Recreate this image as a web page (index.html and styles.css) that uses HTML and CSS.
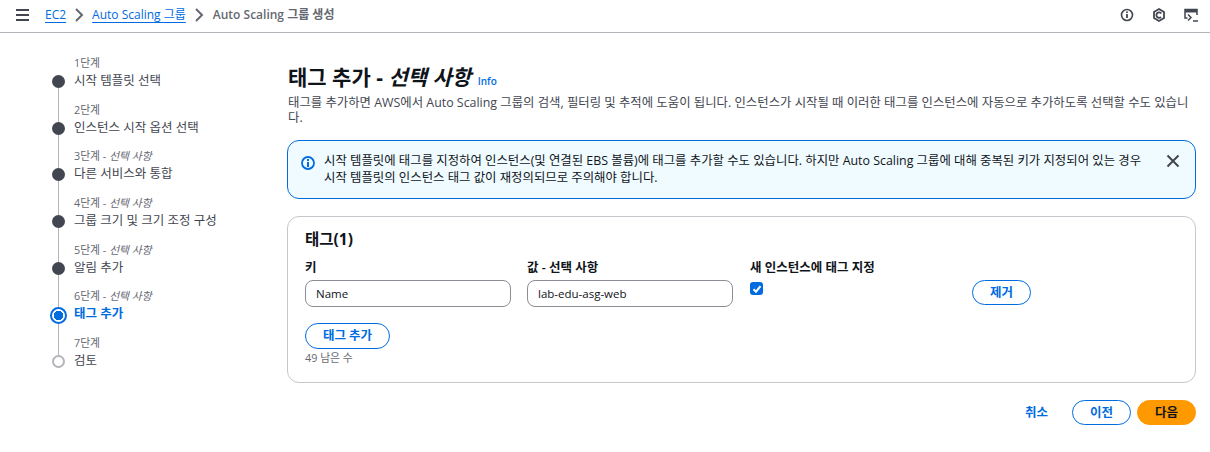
FILE: index.html
```html
<!DOCTYPE html>
<html lang="ko">
<head>
<meta charset="utf-8">
<title>Auto Scaling 그룹 생성</title>
<link rel="stylesheet" href="styles.css">
</head>
<body>
<header class="topbar">
  <svg class="menu" width="16" height="16" viewBox="0 0 16 16"><path d="M1 3h13M1 8h13M1 13h13" stroke="#424650" stroke-width="2" fill="none"/></svg>
  <nav class="crumbs">
    <a class="crumb-link">EC2</a>
    <svg class="chev" width="16" height="16" viewBox="0 0 16 16"><path d="M5 2l6 6-6 6" stroke="#656871" stroke-width="2" fill="none"/></svg>
    <a class="crumb-link">Auto Scaling 그룹</a>
    <svg class="chev" width="16" height="16" viewBox="0 0 16 16"><path d="M5 2l6 6-6 6" stroke="#656871" stroke-width="2" fill="none"/></svg>
    <span class="crumb-current">Auto Scaling 그룹 생성</span>
  </nav>
  <div class="tools">
    <svg width="16" height="16" viewBox="0 0 16 16"><circle cx="8" cy="8" r="5.500" stroke="#424650" stroke-width="1.600" fill="none"/><path d="M8 7v4M8 4.500v1.500" stroke="#424650" stroke-width="1.800" fill="none"/></svg>
    <svg width="16" height="16" viewBox="0 0 16 16"><path d="M8 2l5 2.900v6.200L8 14l-5-2.900V4.900z" stroke="#424650" stroke-width="1.800" fill="none"/><path d="M10.300 6.500A2.700 2.700 0 1 0 10 10" stroke="#424650" stroke-width="1.800" fill="none"/></svg>
    <svg width="16" height="16" viewBox="0 0 16 16"><path d="M4.500 11H2V2.500h12V8" stroke="#424650" stroke-width="1.500" fill="none"/><path d="M2 2.500h12v3H2z" fill="#424650"/><path d="M5 7.500l3 3-3 3" stroke="#424650" stroke-width="1.500" fill="none"/><path d="M10 14h5" stroke="#424650" stroke-width="1.500" fill="none"/></svg>
  </div>
</header>
<div class="layout">
  <ol class="steps">
    <li class="step"><span class="step-no">1단계</span><span class="step-title">시작 템플릿 선택</span></li>
    <li class="step"><span class="step-no">2단계</span><span class="step-title">인스턴스 시작 옵션 선택</span></li>
    <li class="step"><span class="step-no">3단계 - <i>선택 사항</i></span><span class="step-title">다른 서비스와 통합</span></li>
    <li class="step"><span class="step-no">4단계 - <i>선택 사항</i></span><span class="step-title">그룹 크기 및 크기 조정 구성</span></li>
    <li class="step"><span class="step-no">5단계 - <i>선택 사항</i></span><span class="step-title">알림 추가</span></li>
    <li class="step step-active"><span class="step-no">6단계 - <i>선택 사항</i></span><span class="step-title">태그 추가</span></li>
    <li class="step step-todo"><span class="step-no">7단계</span><span class="step-title">검토</span></li>
  </ol>
  <main class="main">
    <div class="page-head">
      <h1 class="page-title">태그 추가 - <i>선택 사항</i> <a class="info">Info</a></h1>
      <p class="page-desc">태그를 추가하면 AWS에서 Auto Scaling 그룹의 검색, 필터링 및 추적에 도움이 됩니다. 인스턴스가 시작될 때 이러한 태그를 인스턴스에 자동으로 추가하도록 선택할 수도 있습니다.</p>
    </div>
    <div class="alert">
      <svg class="alert-icon" width="16" height="16" viewBox="0 0 16 16"><circle cx="8" cy="8" r="6" stroke="#006ce0" stroke-width="1.800" fill="none"/><path d="M8 7v5M8 4v2" stroke="#006ce0" stroke-width="2" fill="none"/></svg>
      <p class="alert-text">시작 템플릿에 태그를 지정하여 인스턴스(및 연결된 EBS 볼륨)에 태그를 추가할 수도 있습니다. 하지만 Auto Scaling 그룹에 대해 중복된 키가 지정되어 있는 경우 시작 템플릿의 인스턴스 태그 값이 재정의되므로 주의해야 합니다.</p>
      <svg class="alert-close" width="16" height="16" viewBox="0 0 16 16"><path d="M2.500 2.500l11 11M13.500 2.500l-11 11" stroke="#424650" stroke-width="2" fill="none"/></svg>
    </div>
    <section class="card">
      <h2 class="card-title">태그(1)</h2>
      <div class="tag-row">
        <div class="field field-text">
          <label class="field-label">키</label>
          <div class="input">Name</div>
        </div>
        <div class="field field-text">
          <label class="field-label">값 - 선택 사항</label>
          <div class="input">lab-edu-asg-web</div>
        </div>
        <div class="field field-check">
          <label class="field-label">새 인스턴스에 태그 지정</label>
          <span class="check"><svg width="10" height="10" viewBox="0 0 10 10"><path d="M1.500 5.200l2.500 2.500 4.500-5.500" stroke="#fff" stroke-width="2" fill="none"/></svg></span>
        </div>
        <button class="btn btn-remove">제거</button>
      </div>
      <button class="btn btn-add">태그 추가</button>
      <p class="remaining">49 남은 수</p>
    </section>
    <div class="actions">
      <a class="cancel">취소</a>
      <button class="btn">이전</button>
      <button class="btn btn-primary">다음</button>
    </div>
  </main>
</div>
</body>
</html>
```
FILE: styles.css
```css
*, *::before, *::after { box-sizing: border-box; }
html, body { margin: 0; padding: 0; }
body {
  width: 1210px; height: 452px; overflow: hidden; background: #fff; color: #0f141a;
  font-family: "Open Sans", "Noto Sans CJK KR", sans-serif; font-size: 12px; line-height: 16px;
}
.topbar {
  height: 33px; border-bottom: 1px solid #b4b4bb; display: flex; align-items: center;
  padding: 0 11px 2px 15px;
}
.menu { margin-right: 14px; }
.crumbs { display: flex; align-items: center; gap: 5px; font-size: 12px; color: #424650; }
.crumb-link { color: #006ce0; text-decoration: underline; text-underline-offset: 3px; }
.crumb-current { font-weight: 600; color: #656871; margin-left: 1px; }
.tools { margin-left: auto; display: flex; gap: 16px; }
.layout { display: flex; }
.steps { list-style: none; margin: 0; padding: 22px 0 0 51px; width: 287px; flex: none; }
.step {
  position: relative; height: 46.700px; padding: 1px 0 0 23px; display: flex; flex-direction: column;
}
.step::before {
  content: ""; position: absolute; left: 1px; top: 20px; width: 13px; height: 13px; border-radius: 50%;
  background: #424650; z-index: 1;
}
.step::after {
  content: ""; position: absolute; left: 7px; top: 33px; width: 1px; height: 34px; background: #b4b4bb;
}
.step:last-child::after { display: none; }
.step-no { font-size: 10.800px; line-height: 14px; color: #656871; }
.step-no i { font-style: italic; }
.step-title { font-size: 12.500px; line-height: 18px; color: #424650; margin-top: 2px; }
.step-active .step-title { color: #006ce0; font-weight: 700; }
.step-active { z-index: 1; }
.step-active::before {
  left: -1px; top: 19px; width: 17px; height: 17px; border: 2px solid #006ce0;
  background: radial-gradient(circle, #006ce0 4.500px, #fff 5px);
}
.step-todo::before { background: #fff; border: 2px solid #b4b4bb; left: 1px; top: 20px; width: 13px; height: 13px; }
.main { width: 909px; padding-top: 32px; }
.page-head { padding-left: 1px; }
.page-title { margin: 0; font-size: 21px; line-height: 24px; font-weight: 700; color: #0f141a; }
.info { font-size: 10px; color: #006ce0; font-style: normal; font-weight: 600; margin-left: 1px; }
.page-desc { margin: 2px 0 0; font-size: 12.400px; line-height: 15px; color: #424650; word-break: break-all; }
.alert {
  margin-top: 15px; height: 59px; display: flex; align-items: flex-start; gap: 8px;
  background: #f0fbff; border: 1px solid #006ce0; border-radius: 12px; padding: 11px 14px 0 12px;
}
.alert-icon { flex: none; margin-top: 3px; }
.alert-text { margin: 0; font-size: 12.400px; line-height: 17px; color: #0f141a; width: 828px; word-break: break-all; }
.alert-close { flex: none; margin-left: auto; margin-top: 1px; }
.card {
  margin-top: 17px; height: 167px; border: 1px solid #c6c6cd; border-radius: 12px; padding: 12px 17px 0;
}
.card-title { margin: 0; font-size: 15.500px; line-height: 20px; font-weight: 700; }
.tag-row { display: flex; margin-top: 10px; height: 57px; }
.field { display: flex; flex-direction: column; }
.field-text { width: 206px; margin-right: 16px; }
.field-check { width: 222px; margin-left: 1px; }
.field-label { font-size: 12.500px; line-height: 16px; font-weight: 600; color: #0f141a; margin-top: 1px; }
.input {
  margin-top: 4px; height: 27px; border: 1px solid #8c8c94; border-radius: 8px; padding: 0 10px;
  font-size: 11.500px; line-height: 25px; color: #0f141a;
}
.check {
  width: 13px; height: 13px; border-radius: 3px; background: #006ce0; margin-top: 6px;
  display: flex; align-items: center; justify-content: center;
}
.btn {
  height: 25px; padding: 0 20px; border: 1px solid #006ce0; border-radius: 13px; background: #fff;
  color: #006ce0; font-family: inherit; font-size: 12.500px; font-weight: 700; line-height: 22px;
}
.btn-remove { margin-top: 21px; width: 59px; padding: 0; }
.btn-add { margin-top: 7px; width: 85px; height: 26px; padding: 0; display: block; }
.remaining { margin: 2px 0 0; font-size: 10.800px; line-height: 14px; color: #656871; }
.actions { display: flex; align-items: center; justify-content: flex-end; margin-top: 17px; }
.cancel { font-size: 12.500px; font-weight: 700; color: #006ce0; margin-right: 24px; }
.actions .btn { width: 59px; padding: 0; }
.btn-primary { background: #ff9900; border-color: #ff9900; color: #0f141a; margin-left: 6px; }
```
